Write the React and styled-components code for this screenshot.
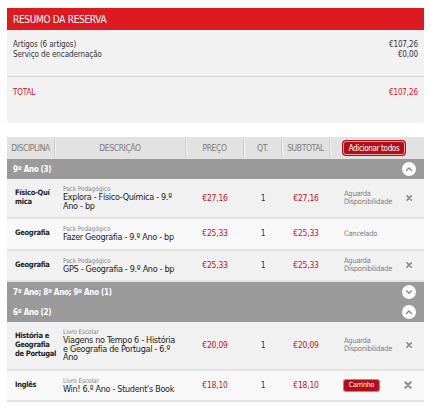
import React from "react";
import styled, { createGlobalStyle } from "styled-components";

const Global = createGlobalStyle`
  html, body { margin: 0; padding: 0; background: #fff; }
  body {
    padding: 8px 7px;
    font-family: "DejaVu Sans Condensed", "DejaVu Sans", sans-serif;
    font-stretch: condensed;
    color: #333;
  }
  * { box-sizing: border-box; }
`;

const Page = styled.div`
  width: 417px;
  display: flex;
  flex-direction: column;
`;

const RedBar = styled.div`
  height: 22px;
  background: #dd1a22;
  color: #fff;
  font-size: 10px;
  display: flex;
  align-items: center;
  padding-left: 6px;
  letter-spacing: -0.3px;
`;

const Summary = styled.div`
  background: #f2f2f2;
  height: 93px;
  display: flex;
  flex-direction: column;
`;

const SummaryTop = styled.div`
  height: 47px;
  padding: 10px 6px 0;
  border-bottom: 1px solid #d6d6d6;
  font-size: 8px;
  line-height: 10px;
  letter-spacing: -0.1px;
`;

const Line = styled.div`
  display: flex;
  justify-content: space-between;
  color: ${(p) => (p.$red ? "#e0101e" : "#333")};
`;

const SummaryBottom = styled.div`
  padding: 11px 6px 0;
  font-size: 8px;
  line-height: 10px;
  letter-spacing: -0.1px;
`;

const Table = styled.div`
  margin-top: 14px;
  display: flex;
  flex-direction: column;
`;

const headCols = "48px 131px 58px 38px 48px 94px";
const rowCols = "50px 129px 58px 38px 48px 94px";

const HeadRow = styled.div`
  display: grid;
  grid-template-columns: ${headCols};
  height: 22px;
  align-items: center;
  background: #e2e2e2;
`;

const HeadCell = styled.div`
  height: 17px;
  display: flex;
  align-items: center;
  font-size: 8.5px;
  color: #7a7a7a;
  letter-spacing: -0.4px;
  border-right: ${(p) => (p.$last ? "none" : "1px solid #c9c9c9")};
  box-shadow: ${(p) => (p.$last ? "none" : "1px 0 0 #f2f2f2")};
  justify-content: ${(p) => (p.$start ? "flex-start" : "center")};
  padding-left: ${(p) => (p.$start ? "13px" : "0")};
`;

const AddAll = styled.button`
  height: 14px;
  width: 62px;
  padding: 0;
  border: 1px solid #e6a3a6;
  border-radius: 3px;
  background: #b30f18;
  color: #fff;
  font-family: inherit;
  font-size: 8px;
  letter-spacing: -0.35px;
  box-shadow: 0 0 0 1px #b30f18;
`;

const GroupRow = styled.div`
  height: 20px;
  background: #9a9a9a;
  display: flex;
  align-items: center;
  justify-content: space-between;
  padding: 0 8px 0 6px;
  color: #fff;
  font-weight: bold;
  font-size: 8px;
  letter-spacing: -0.3px;
`;

const Circle = styled.span`
  width: 14px;
  height: 14px;
  border-radius: 50%;
  background: #fff;
  display: flex;
  align-items: center;
  justify-content: center;
`;

const Row = styled.div`
  display: grid;
  grid-template-columns: ${rowCols};
  align-items: center;
  min-height: 31px;
  background: ${(p) => (p.$alt ? "#f8f8f8" : "#f1f1f1")};
  border-bottom: 2px solid #e3e3e3;
`;

const Cell = styled.div`
  padding: 7px 0;
  font-size: 8.5px;
  line-height: 9px;
  text-align: center;
  color: #333;
  letter-spacing: -0.2px;
`;

const Discipline = styled(Cell)`
  text-align: left;
  padding-left: 8px;
  padding-right: 0;
  font-weight: bold;
  font-size: 7.5px;
  line-height: 8.7px;
  letter-spacing: -0.3px;
  color: #222;
`;

const Desc = styled(Cell)`
  text-align: left;
  padding-left: 6px;
  padding-right: 8px;
`;

const Kind = styled.div`
  font-size: 6.5px;
  line-height: 7px;
  letter-spacing: -0.1px;
  color: #888;
`;

const Title = styled.div`
  font-size: 9px;
  line-height: 8.5px;
  letter-spacing: -0.3px;
  color: #222;
`;

const Price = styled(Cell)`
  color: #d50f1c;
`;

const Action = styled.div`
  display: flex;
  align-items: center;
  justify-content: space-between;
  padding: 0 12px 0 14px;
`;

const Status = styled.div`
  font-size: 7.5px;
  line-height: 8.5px;
  letter-spacing: -0.25px;
  color: #808080;
`;

const Cart = styled.span`
  display: inline-flex;
  align-items: center;
  justify-content: center;
  width: 35px;
  height: 11px;
  background: #b30f18;
  border-radius: 2px;
  color: #fff;
  font-size: 7px;
  letter-spacing: -0.2px;
  box-shadow: 0 0 0 1px #d77;
`;

const Chevron = ({ up }) => (
  <svg width="8" height="6" viewBox="0 0 8 6">
    <path
      d={up ? "M1.5 4.5 L4 2 L6.5 4.5" : "M1.5 1.8 L4 4.3 L6.5 1.8"}
      fill="none"
      stroke="#888"
      strokeWidth="1.4"
      strokeLinecap="round"
    />
  </svg>
);

const Close = () => (
  <svg width="8" height="8" viewBox="0 0 8 8">
    <path d="M1.3 1.3 L6.7 6.7 M6.7 1.3 L1.3 6.7" stroke="#8a8a8a" strokeWidth="2" strokeLinecap="round" />
  </svg>
);

const Group = ({ label, up }) => (
  <GroupRow>
    <span>{label}</span>
    <Circle>
      <Chevron up={up} />
    </Circle>
  </GroupRow>
);

const Item = ({ disc, kind, title, price, status, cart, removable, alt }) => (
  <Row $alt={alt}>
    <Discipline>{disc}</Discipline>
    <Desc>
      <Kind>{kind}</Kind>
      <Title>{title}</Title>
    </Desc>
    <Price>{price}</Price>
    <Cell>1</Cell>
    <Price>{price}</Price>
    <Action>
      {cart ? <Cart>Carrinho</Cart> : <Status>{status}</Status>}
      {removable ? <Close /> : <span />}
    </Action>
  </Row>
);

export default function App() {
  return (
    <Page>
      <Global />
      <RedBar>RESUMO DA RESERVA</RedBar>
      <Summary>
        <SummaryTop>
          <Line>
            <span>Artigos (6 artigos)</span>
            <span>€107,26</span>
          </Line>
          <Line>
            <span>Serviço de encadernação</span>
            <span>€0,00</span>
          </Line>
        </SummaryTop>
        <SummaryBottom>
          <Line $red>
            <span>TOTAL</span>
            <span>€107,26</span>
          </Line>
        </SummaryBottom>
      </Summary>
      <Table>
        <HeadRow>
          <HeadCell>DISCIPLINA</HeadCell>
          <HeadCell>DESCRIÇÃO</HeadCell>
          <HeadCell>PREÇO</HeadCell>
          <HeadCell>QT.</HeadCell>
          <HeadCell>SUBTOTAL</HeadCell>
          <HeadCell $last $start>
            <AddAll>Adicionar todos</AddAll>
          </HeadCell>
        </HeadRow>
        <Group label="9º Ano (3)" up />
        <Item
          disc={<>Físico-Quí<wbr />mica</>}
          kind="Pack Pedagógico"
          title="Explora - Físico-Química - 9.º Ano - bp"
          price="€27,16"
          status="Aguarda Disponibilidade"
          removable
        />
        <Item
          alt
          disc="Geografia"
          kind="Pack Pedagógico"
          title="Fazer Geografia - 9.º Ano - bp"
          price="€25,33"
          status="Cancelado"
        />
        <Item
          disc="Geografia"
          kind="Pack Pedagógico"
          title="GPS - Geografia - 9.º Ano - bp"
          price="€25,33"
          status="Aguarda Disponibilidade"
          removable
        />
        <Group label="7º Ano; 8º Ano; 9º Ano (1)" />
        <Group label="6º Ano (2)" up />
        <Item
          disc="História e Geografia de Portugal"
          kind="Livro Escolar"
          title="Viagens no Tempo 6 - História e Geografia de Portugal - 6.º Ano"
          price="€20,09"
          status="Aguarda Disponibilidade"
          removable
        />
        <Item
          alt
          disc="Inglês"
          kind="Livro Escolar"
          title="Win! 6.º Ano - Student's Book"
          price="€18,10"
          cart
          removable
        />
      </Table>
    </Page>
  );
}
